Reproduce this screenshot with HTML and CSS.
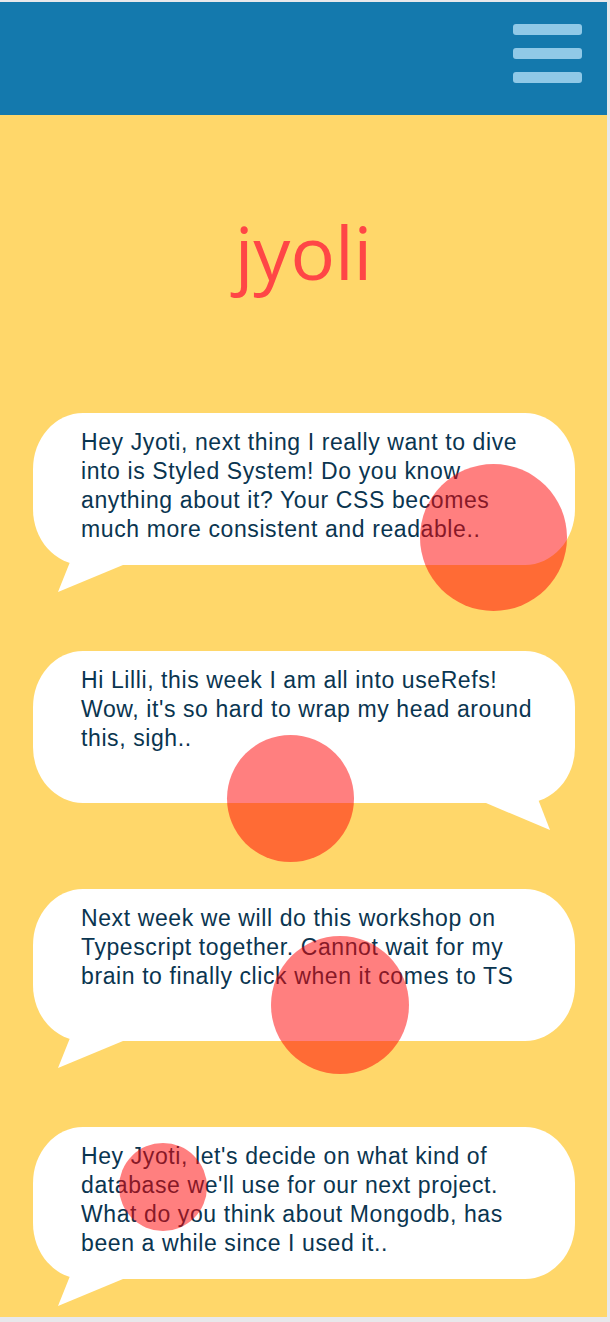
FILE: index.html
```html
<!DOCTYPE html>
<html lang="en">
<head>
<meta charset="utf-8">
<title>jyoli</title>
<link rel="stylesheet" href="styles.css">
</head>
<body>
<div class="page">
  <header class="topbar">
    <button class="menu" aria-label="Menu">
      <span class="bar"></span>
      <span class="bar"></span>
      <span class="bar"></span>
    </button>
  </header>
  <main class="chat">
    <h1 class="title">jyoli</h1>
    <div class="thread">
      <div class="bubble tail-left">
        <p>Hey Jyoti, next thing I really want to dive into is Styled System! Do you know anything about it? Your CSS becomes much more consistent and readable..</p>
        <span class="dot dot-1"></span>
      </div>
      <div class="bubble tail-right">
        <p>Hi Lilli, this week I am all into useRefs! Wow, it's so hard to wrap my head around this, sigh..</p>
        <span class="dot dot-2"></span>
      </div>
      <div class="bubble tail-left">
        <p>Next week we will do this workshop on Typescript together. Cannot wait for my brain to finally click when it comes to TS</p>
        <span class="dot dot-3"></span>
      </div>
      <div class="bubble tail-left">
        <p>Hey Jyoti, let's decide on what kind of database we'll use for our next project. What do you think about Mongodb, has been a while since I used it..</p>
        <span class="dot dot-4"></span>
      </div>
    </div>
  </main>
</div>
</body>
</html>
```
FILE: styles.css
```css
html {
  background: #e8e8eb;
}
body {
  margin: 0;
  font-family: "Liberation Sans", Arial, sans-serif;
}
.page {
  width: 607px;
  height: 1315px;
  margin-top: 2px;
  background: #ffd76a;
  overflow: hidden;
}
.topbar {
  height: 113px;
  background: #1479ad;
  display: flex;
  justify-content: flex-end;
  align-items: flex-start;
  padding: 22px 25px 0 0;
  box-sizing: border-box;
}
.menu {
  display: flex;
  flex-direction: column;
  gap: 13px;
  padding: 0;
  border: 0;
  background: none;
}
.bar {
  display: block;
  width: 69px;
  height: 11px;
  border-radius: 3px;
  background: #90c9e7;
}
.chat {
  display: flex;
  flex-direction: column;
  align-items: center;
}
.title {
  margin: 100px 0 0;
  font-family: "Open Sans", "Noto Sans", sans-serif;
  font-weight: 400;
  font-size: 74px;
  line-height: 74px;
  color: #ff4646;
}
.thread {
  margin-top: 124px;
  width: 542px;
  margin-left: 33px;
  margin-right: 32px;
  display: flex;
  flex-direction: column;
  gap: 86px;
}
.bubble {
  position: relative;
  height: 152px;
  box-sizing: border-box;
  padding: 15px 34px 0 48px;
  background: #ffffff;
  border-radius: 50px / 56px;
}
.bubble p {
  position: relative;
  z-index: 1;
  margin: 0;
  font-size: 23px;
  line-height: 29px;
  letter-spacing: 0.6px;
  color: #0a3550;
}
.bubble::after {
  content: "";
  position: absolute;
  top: 130px;
  height: 52px;
  background: #ffffff;
}
.tail-left::after {
  left: 20px;
  width: 72px;
  clip-path: polygon(24.6px 0, 70px 0, 70px 22px, 5px 49px);
}
.tail-right::after {
  left: 440px;
  width: 80px;
  clip-path: polygon(13px 0, 58px 0, 77px 49px, 13px 22px);
}
.dot {
  position: absolute;
  z-index: 2;
  border-radius: 50%;
  background: rgba(255, 0, 0, 0.5);
}
.dot-1 {
  left: 387px;
  top: 51px;
  width: 147px;
  height: 147px;
}
.dot-2 {
  left: 194px;
  top: 84px;
  width: 127px;
  height: 127px;
}
.dot-3 {
  left: 238px;
  top: 47px;
  width: 138px;
  height: 138px;
}
.dot-4 {
  left: 86px;
  top: 16px;
  width: 88px;
  height: 88px;
}
```
